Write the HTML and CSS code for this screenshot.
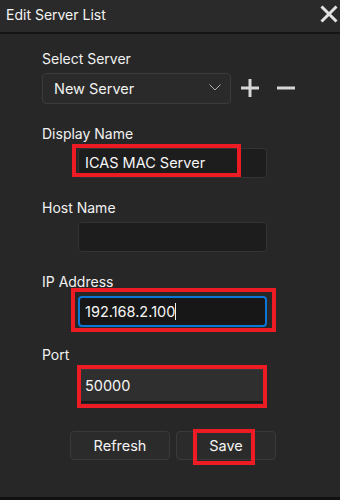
FILE: index.html
```html
<!DOCTYPE html>
<html>
<head>
<meta charset="utf-8">
<link rel="stylesheet" href="styles.css">
</head>
<body>
<div class="window">
  <div class="titlebar">
    <span class="title">Edit Server List</span>
    <svg class="close" width="18" height="18" viewBox="0 0 18 18"><path d="M1.5 1.5 L16.5 16.5 M16.5 1.5 L1.5 16.5" stroke="#e2e2e2" stroke-width="3" fill="none"/></svg>
  </div>
  <div class="content">
    <div class="field">
      <div class="label">Select Server</div>
      <div class="select-row">
        <div class="select">
          <span class="select-text">New Server</span>
          <svg class="chevron" width="12" height="7" viewBox="0 0 12 7"><path d="M0.5 0.5 L6 6 L11.5 0.5" stroke="#b0b0b0" stroke-width="1" fill="none"/></svg>
        </div>
        <svg class="icon-btn" width="18" height="18" viewBox="0 0 18 18"><path d="M9 0 V18 M0 9 H18" stroke="#d6d6d6" stroke-width="3" fill="none"/></svg>
        <svg class="icon-btn minus" width="18" height="18" viewBox="0 0 18 18"><path d="M0 9 H18" stroke="#d6d6d6" stroke-width="3" fill="none"/></svg>
      </div>
    </div>
    <div class="field">
      <div class="label">Display Name</div>
      <div class="input-wrap">
        <div class="input">ICAS MAC Server</div>
        <div class="mark mark-display"></div>
      </div>
    </div>
    <div class="field">
      <div class="label">Host Name</div>
      <div class="input-wrap">
        <div class="input"></div>
      </div>
    </div>
    <div class="field field-ip">
      <div class="label">IP Address</div>
      <div class="input-wrap">
        <div class="input focused">192.168.2.100<span class="caret"></span></div>
        <div class="mark mark-ip"></div>
      </div>
    </div>
    <div class="field field-port">
      <div class="label">Port</div>
      <div class="input-wrap">
        <div class="input hover">50000</div>
        <div class="mark mark-port"></div>
      </div>
    </div>
    <div class="buttons">
      <div class="btn">Refresh</div>
      <div class="btn btn-save">Save<div class="mark mark-save"></div></div>
    </div>
  </div>
  <div class="bottom-strip"></div>
</div>
</body>
</html>
```

FILE: styles.css
```css
* { box-sizing: border-box; }
html, body {
  margin: 0;
  padding: 0;
  background: #272727;
}
body {
  font-family: Inter, "Open Sans", sans-serif;
  color: #f2f2f2;
  width: 340px;
  height: 500px;
  overflow: hidden;
}
.window {
  width: 340px;
  height: 500px;
  display: flex;
  flex-direction: column;
  background: #272727;
}
.titlebar {
  height: 34px;
  flex: none;
  background: #2a2a2a;
  border-bottom: 2px solid #151515;
  display: flex;
  align-items: flex-start;
  justify-content: space-between;
  padding: 0 2px 0 6px;
}
.title {
  font-size: 14px;
  line-height: 17px;
  margin-top: 6px;
  color: #f4f4f4;
}
.close {
  margin-top: 5px;
}
.content {
  flex: 1;
  padding: 16px 0 0 42px;
}
.field {
  margin-bottom: 21px;
}
.field-ip { margin-bottom: 19px; }
.field-port { margin-bottom: 28px; }
.label {
  font-size: 14px;
  line-height: 17px;
  height: 17px;
  margin-bottom: 6px;
  color: #f2f2f2;
}
.select-row {
  display: flex;
  align-items: center;
}
.select {
  width: 189px;
  height: 31px;
  border: 1px solid #3b3b3b;
  border-radius: 4px;
  background: #2a2a2a;
  display: flex;
  align-items: center;
  justify-content: space-between;
  padding: 0 9px 0 11px;
}
.select-text {
  font-size: 14.5px;
}
.chevron { margin-top: -2px; }
.icon-btn { margin-left: 10px; margin-top: -2px; }
.icon-btn.minus { margin-left: 18px; }
.input-wrap {
  position: relative;
  margin-left: 36px;
  width: 189px;
}
.input {
  height: 30px;
  border: 1px solid #333;
  border-radius: 4px;
  background: #1d1d1d;
  font-size: 14.5px;
  line-height: 28px;
  padding-left: 6px;
  color: #f6f6f6;
}
.input.focused {
  height: 31px;
  border: 2px solid #0b76d8;
  background: #171717;
  line-height: 27px;
  padding-left: 5px;
}
.caret {
  display: inline-block;
  width: 1px;
  height: 17px;
  background: #f0f0f0;
  vertical-align: -3px;
}
.input.hover {
  height: 34px;
  background: #2f2f2f;
  border: 1px solid #3a3a3a;
  border-bottom: 2px solid #1a1a1a;
  line-height: 31px;
}
.mark {
  position: absolute;
  border: 4px solid #ed1c24;
  pointer-events: none;
}
.mark-display { left: -6px; top: -4px; width: 169px; height: 33px; }
.mark-ip { left: -7px; top: -8px; width: 205px; height: 44px; }
.mark-port { left: -1px; top: -4px; width: 190px; height: 43px; }
.buttons {
  display: flex;
  gap: 6px;
  margin-left: 28px;
}
.btn {
  position: relative;
  width: 100px;
  height: 29px;
  border: 1px solid #3a3a3a;
  border-radius: 4px;
  background: #2b2b2b;
  font-size: 14.5px;
  line-height: 27px;
  text-align: center;
  color: #f4f4f4;
}
.mark-save { left: 16px; top: -3px; width: 62px; height: 36px; }
.bottom-strip {
  height: 3px;
  background: #111;
  flex: none;
}
```
